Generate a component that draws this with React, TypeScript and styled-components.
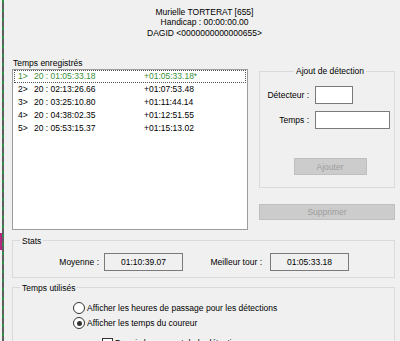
import React from "react";
import styled, { createGlobalStyle, css } from "styled-components";

const Global = createGlobalStyle`
  html, body { margin: 0; padding: 0; background: #f0f0f0; }
  * { box-sizing: border-box; }
`;

const Window = styled.div`
  width: 400px;
  height: 341px;
  overflow: hidden;
  display: flex;
  background: #f0f0f0;
  font-family: "Liberation Sans", Arial, sans-serif;
  font-size: 8.5px;
  color: #000;
`;

const Edge = styled.div`
  flex: none;
  width: 4px;
  background:
    linear-gradient(#b3287e, #b3287e) 0 233px / 2px 17px no-repeat,
    repeating-linear-gradient(to bottom, #2f8f4a 0 3px, #5e5e5e 3px 9px) 2px 0 / 2px 100% repeat-y;
`;

const Form = styled.div`
  flex: 1;
  display: flex;
  flex-direction: column;
  padding: 7px 5px 0 8px;
`;

const Header = styled.div`
  text-align: center;
  line-height: 10.3px;
  padding-left: 2px;
`;

const MainRow = styled.div`
  display: grid;
  grid-template-columns: 236px 136px;
  column-gap: 11px;
  margin-top: 19px;
`;

const Column = styled.div<{ $top?: number }>`
  display: flex;
  flex-direction: column;
  padding-top: ${(p) => p.$top ?? 0}px;
`;

const Caption = styled.div`
  line-height: 12px;
  padding-left: 1px;
`;

const List = styled.div`
  height: 161px;
  background: #fff;
  border: 1px solid #9c9c9c;
  padding: 0 1px;
`;

const Row = styled.div<{ $active?: boolean }>`
  display: grid;
  grid-template-columns: 16px 110px 1fr;
  height: 13px;
  line-height: 11px;
  padding-left: 3px;
  border: 1px dotted transparent;
  color: #000;
  ${(p) =>
    p.$active &&
    css`
      border-color: #555;
      color: #3b8f3b;
    `}
`;

const GroupBox = styled.fieldset<{ $pad: string; $mt?: number }>`
  margin: ${(p) => p.$mt ?? 0}px 0 0 0;
  padding: ${(p) => p.$pad};
  border: 1px solid #dadada;
  min-width: 0;
`;

const Legend = styled.legend<{ $center?: boolean; $ml?: number }>`
  padding: 0 2px;
  line-height: 12px;
  font-size: 8.5px;
  ${(p) =>
    p.$center
      ? css`
          margin: 0 auto;
        `
      : css`
          margin-left: ${p.$ml ?? 0}px;
        `}
`;

const FieldGrid = styled.div`
  display: grid;
  grid-template-columns: 43px auto;
  column-gap: 6px;
  row-gap: 7px;
  align-items: center;
`;

const FieldLabel = styled.span`
  text-align: right;
  white-space: nowrap;
`;

const TextInput = styled.div<{ $w: number }>`
  width: ${(p) => p.$w}px;
  height: 18px;
  background: #fff;
  border: 1px solid #7a7a7a;
`;

const DisabledButton = styled.div<{ $w?: number; $h: number; $mt: number }>`
  width: ${(p) => (p.$w ? `${p.$w}px` : "100%")};
  height: ${(p) => p.$h}px;
  margin: ${(p) => p.$mt}px auto 0;
  background: #cccccc;
  border: 1px solid #bfbfbf;
  color: #9d9d9d;
  display: flex;
  align-items: center;
  justify-content: center;
`;

const StatsRow = styled.div`
  display: flex;
  align-items: center;
`;

const StatLabel = styled.span<{ $w: number; $mr: number }>`
  width: ${(p) => p.$w}px;
  margin-right: ${(p) => p.$mr}px;
  text-align: right;
  white-space: nowrap;
`;

const ValueBox = styled.div`
  width: 79px;
  height: 18px;
  border: 1px solid #7a7a7a;
  display: flex;
  align-items: center;
  justify-content: center;
`;

const OptionRow = styled.div<{ $indent?: number; $mt?: number }>`
  display: flex;
  align-items: center;
  height: 15px;
  gap: 2px;
  padding-left: ${(p) => p.$indent ?? 0}px;
  margin-top: ${(p) => p.$mt ?? 0}px;
  white-space: nowrap;
`;

const Radio = styled.span<{ $checked?: boolean }>`
  position: relative;
  flex: none;
  width: 12px;
  height: 12px;
  border-radius: 50%;
  border: 1px solid #333;
  background: #fff;
  ${(p) =>
    p.$checked &&
    css`
      &::after {
        content: "";
        position: absolute;
        left: 2.5px;
        top: 2.5px;
        width: 5px;
        height: 5px;
        border-radius: 50%;
        background: #333;
      }
    `}
`;

const Check = styled.span`
  flex: none;
  width: 11px;
  height: 11px;
  border: 1px solid #333;
  background: #fff;
`;

const rows = [
  ["1>", "20 : 01:05:33.18", "+01:05:33.18*"],
  ["2>", "20 : 02:13:26.66", "+01:07:53.48"],
  ["3>", "20 : 03:25:10.80", "+01:11:44.14"],
  ["4>", "20 : 04:38:02.35", "+01:12:51.55"],
  ["5>", "20 : 05:53:15.37", "+01:15:13.02"],
];

export default function App() {
  return (
    <Window>
      <Global />
      <Edge />
      <Form>
        <Header>
          <div>Murielle TORTERAT [655]</div>
          <div>Handicap : 00:00:00.00</div>
          <div>DAGID &lt;0000000000000655&gt;</div>
        </Header>

        <MainRow>
          <Column>
            <Caption>Temps enregistrés</Caption>
            <List>
              {rows.map((r, i) => (
                <Row key={r[0]} $active={i === 0}>
                  <span>{r[0]}</span>
                  <span>{r[1]}</span>
                  <span>{r[2]}</span>
                </Row>
              ))}
            </List>
          </Column>
          <Column $top={8.5}>
            <GroupBox $pad="9px 0 12px 6px">
              <Legend $center>Ajout de détection</Legend>
              <FieldGrid>
                <FieldLabel>Détecteur :</FieldLabel>
                <TextInput $w={38} />
                <FieldLabel>Temps :</FieldLabel>
                <TextInput $w={75} />
              </FieldGrid>
              <DisabledButton $w={73} $h={17} $mt={29}>
                Ajouter
              </DisabledButton>
            </GroupBox>
            <DisabledButton $h={16} $mt={16}>
              Supprimer
            </DisabledButton>
          </Column>
        </MainRow>

        <GroupBox $pad="6px 0 6px 0" $mt={5}>
          <Legend $ml={7}>Stats</Legend>
          <StatsRow>
            <StatLabel $w={86} $mr={5}>
              Moyenne :
            </StatLabel>
            <ValueBox>01:10:39.07</ValueBox>
            <StatLabel $w={79} $mr={8}>
              Meilleur tour :
            </StatLabel>
            <ValueBox>01:05:33.18</ValueBox>
          </StatsRow>
        </GroupBox>

        <GroupBox $pad="7px 0 20px 60px" $mt={4}>
          <Legend $ml={-53}>Temps utilisés</Legend>
          <OptionRow>
            <Radio />
            <span>Afficher les heures de passage pour les détections</span>
          </OptionRow>
          <OptionRow>
            <Radio $checked />
            <span>Afficher les temps du coureur</span>
          </OptionRow>
          <OptionRow $indent={29} $mt={5}>
            <Check />
            <span>Depuis le moment de la détection</span>
          </OptionRow>
        </GroupBox>
      </Form>
    </Window>
  );
}
